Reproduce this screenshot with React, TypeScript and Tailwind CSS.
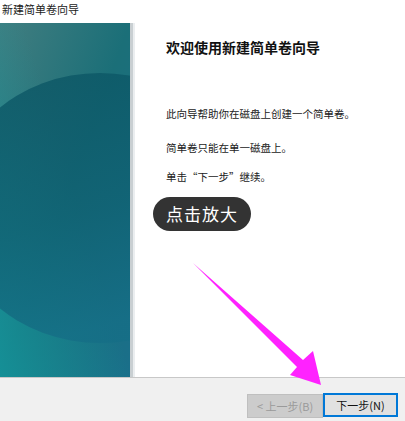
import React from 'react'

const cjk = { fontFamily: '"Noto Sans CJK SC", "Noto Sans", sans-serif' }

function PanelArt() {
  return (
    <svg width="130" height="354" viewBox="0 0 130 354" className="block">
      <defs>
        <linearGradient id="bg" x1="0" y1="0" x2="1" y2="1">
          <stop offset="0" stopColor="#427e80" />
          <stop offset="0.5" stopColor="#1b6f78" />
          <stop offset="1" stopColor="#1a6f8a" />
        </linearGradient>
        <linearGradient id="bl" x1="0" y1="1" x2="0.6" y2="0.5">
          <stop offset="0" stopColor="#14939a" stopOpacity="0.9" />
          <stop offset="1" stopColor="#14939a" stopOpacity="0" />
        </linearGradient>
        <linearGradient id="circ" x1="0" y1="0" x2="0.3" y2="1">
          <stop offset="0" stopColor="#0b5462" />
          <stop offset="0.6" stopColor="#0f6173" />
          <stop offset="1" stopColor="#156e86" />
        </linearGradient>
      </defs>
      <rect width="130" height="354" fill="url(#bg)" />
      <rect width="130" height="354" fill="url(#bl)" />
      <ellipse cx="100" cy="185" rx="150" ry="135" fill="url(#circ)" opacity="0.8" />
    </svg>
  )
}

export default function App() {
  return (
    <div className="relative w-[405px] h-[421px] bg-white overflow-hidden flex flex-col" style={cjk}>
      {/* title */}
      <div className="h-[23px] pl-[2px] pt-[1px] text-[11px] leading-[16px] text-[#1a1a1a]">新建简单卷向导</div>

      <div className="flex h-[354px]">
        <div className="w-[130px] shrink-0">
          <PanelArt />
        </div>
        <div className="w-[3px] bg-[#c9cfd2]" />
        <div className="w-[2px] bg-[#ebeef0]" />
        <div className="flex-1 pl-[31px]">
          <h1 className="mt-[14px] text-[14px] leading-[20px] font-bold text-[#111]">欢迎使用新建简单卷向导</h1>
          <p className="mt-[50px] text-[10.5px] leading-[14px] text-[#222]">此向导帮助你在磁盘上创建一个简单卷。</p>
          <p className="mt-[20px] text-[10.5px] leading-[14px] text-[#222]">简单卷只能在单一磁盘上。</p>
          <p className="mt-[15px] text-[10.5px] leading-[14px] text-[#222]">单击“下一步”继续。</p>
          <div className="mt-[13px] -ml-[13px] w-[98px] h-[34px] rounded-full bg-[#333333] flex items-center justify-center text-white text-[17px] tracking-[1px]">
            点击放大
          </div>
        </div>
      </div>

      <div className="h-[1px] bg-[#c8c8c8]" />
      <div className="flex-1 bg-[#f0f0f0] flex justify-end items-start pt-[16px] pr-[7px]">
        <div className="w-[76px] h-[24px] bg-[#cccccc] border border-[#bfbfbf] text-[#9a9a9a] text-[11px] flex items-center justify-center">
          &lt; 上一步(B)
        </div>
        <div className="w-[75px] h-[24px] -mt-[1px] bg-[#e1e1e1] border-2 border-[#0078d7] text-[#111] text-[11px] flex items-center justify-center">
          下一步(N)
        </div>
      </div>

      {/* magenta arrow annotation */}
      <svg className="absolute left-0 top-0 pointer-events-none" width="405" height="421" viewBox="0 0 405 421">
        <polygon
          points="193,263 303,360 313,351 321,385 290,375 297,367"
          fill="#ff22ff"
        />
      </svg>
    </div>
  )
}
